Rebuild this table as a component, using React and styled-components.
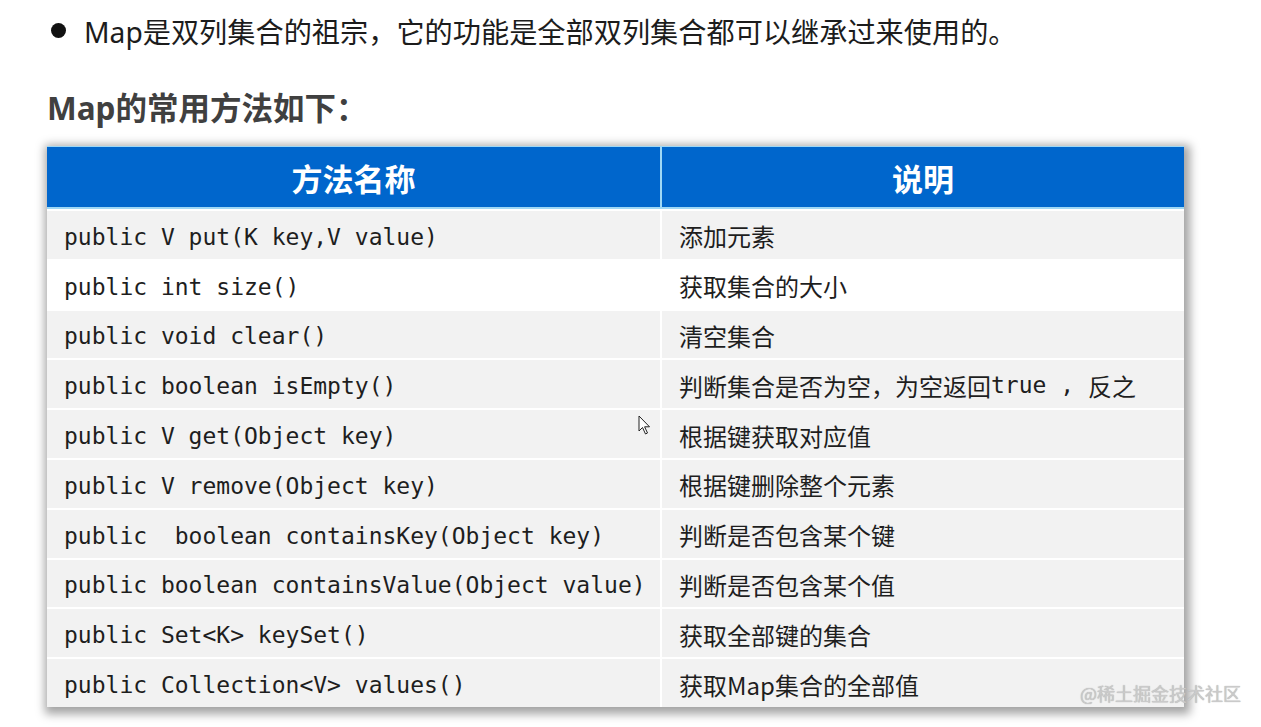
import styled, { createGlobalStyle } from "styled-components";

const GlobalStyle = createGlobalStyle`
	body {
		margin: 0;
		background: #ffffff;
		font-family: "Noto Sans", "Noto Sans CJK SC", sans-serif;
	}
`;

const Page = styled.div`
	position: relative;
	width: 1261px;
	height: 727px;
	overflow: hidden;
	padding: 0 0 0 47px;
	box-sizing: border-box;
`;

const BulletLine = styled.div`
	display: flex;
	align-items: center;
	gap: 18px;
	height: 36px;
	margin-top: 12px;
	padding-left: 4px;
	font-size: 28.2px;
	color: #1c1c1c;
	font-family: "Noto Sans", "Noto Sans CJK SC", sans-serif;
`;

const Dot = styled.span`
	width: 15px;
	height: 15px;
	border-radius: 50%;
	background: #111;
	flex-shrink: 0;
`;

const Heading = styled.h2`
	margin: 40px 0 0;
	height: 40px;
	font-size: 31.5px;
	line-height: 40px;
	font-weight: 700;
	color: #404040;
	font-family: "Noto Sans", "Noto Sans CJK SC", sans-serif;
`;

const Table = styled.div`
	display: grid;
	grid-template-columns: 613px 524px;
	grid-template-rows: 63px repeat(10, 49.8px);
	width: 1137px;
	margin-top: 18px;
	background: #ffffff;
	box-shadow: 2px 3px 9px 4px rgba(0, 0, 0, 0.36);
`;

const HeadCell = styled.div`
	display: flex;
	align-items: center;
	justify-content: center;
	background: #0066cc;
	border-top: 1px solid #9fd8f5;
	border-bottom: 2px solid #9fd8f5;
	border-left: ${(p) => (p.$first ? "none" : "2px solid #9fd8f5")};
	box-sizing: border-box;
	color: #ffffff;
	font-size: 31px;
	font-weight: 700;
	font-family: "Noto Sans CJK SC", sans-serif;
`;

const Cell = styled.div`
	display: flex;
	align-items: center;
	padding: ${(p) => (p.$code ? "4px 0 0 17px" : "2px 0 0 17px")};
	box-sizing: border-box;
	background: ${(p) => (p.$white ? "#ffffff" : "#f2f2f2")};
	border-top: 2px solid #ffffff;
	border-left: ${(p) => (p.$code ? "none" : "2px solid #ffffff")};
	color: #1e1e1e;
	white-space: pre;
	font-size: ${(p) => (p.$code ? "23px" : "24px")};
	font-family: ${(p) =>
		p.$code
			? `"DejaVu Sans Mono", "Liberation Mono", monospace`
			: `"Noto Sans CJK SC", sans-serif`};
`;

const Mono = styled.span`
	font-family: "DejaVu Sans Mono", "Liberation Mono", monospace;
	font-size: 23px;
`;

const Watermark = styled.div`
	position: absolute;
	right: 20px;
	bottom: 21px;
	font-size: 18px;
	color: #cacaca;
	text-shadow: 0 0 1px #a4a4a4;
	font-family: "Noto Sans CJK SC", sans-serif;
`;

const Cursor = styled.svg`
	position: absolute;
	left: 638px;
	top: 415px;
`;

const rows = [
	["public V put(K key,V value)", "添加元素"],
	["public int size()", "获取集合的大小"],
	["public void clear()", "清空集合"],
	["public boolean isEmpty()", null],
	["public V get(Object key)", "根据键获取对应值"],
	["public V remove(Object key)", "根据键删除整个元素"],
	["public  boolean containsKey(Object key)", "判断是否包含某个键"],
	["public boolean containsValue(Object value)", "判断是否包含某个值"],
	["public Set<K> keySet()", "获取全部键的集合"],
	["public Collection<V> values()", "获取Map集合的全部值"],
];

const describe = (text) =>
	text ?? (
		<>
			判断集合是否为空，为空返回<Mono>true , </Mono>反之
		</>
	);

const App = () => {
	return (
		<Page>
			<GlobalStyle />
			<BulletLine>
				<Dot />
				<span>Map是双列集合的祖宗，它的功能是全部双列集合都可以继承过来使用的。</span>
			</BulletLine>
			<Heading>Map的常用方法如下：</Heading>
			<Table>
				<HeadCell $first>方法名称</HeadCell>
				<HeadCell>说明</HeadCell>
				{rows.map(([method, text], i) => (
					<>
						<Cell key={`m${i}`} $code $white={i === 1}>
							{method}
						</Cell>
						<Cell key={`d${i}`} $white={i === 1}>
							{describe(text)}
						</Cell>
					</>
				))}
			</Table>
			<Watermark>@稀土掘金技术社区</Watermark>
			<Cursor width="14" height="20" viewBox="0 0 14 20">
				<path
					d="M1 1 L1 16 L4.5 12.5 L7.5 19 L9.5 18 L6.6 11.8 L11.5 11.8 Z"
					fill="#ffffff"
					stroke="#222"
					strokeWidth="1"
					strokeLinejoin="round"
				/>
			</Cursor>
		</Page>
	);
};

export default App;
